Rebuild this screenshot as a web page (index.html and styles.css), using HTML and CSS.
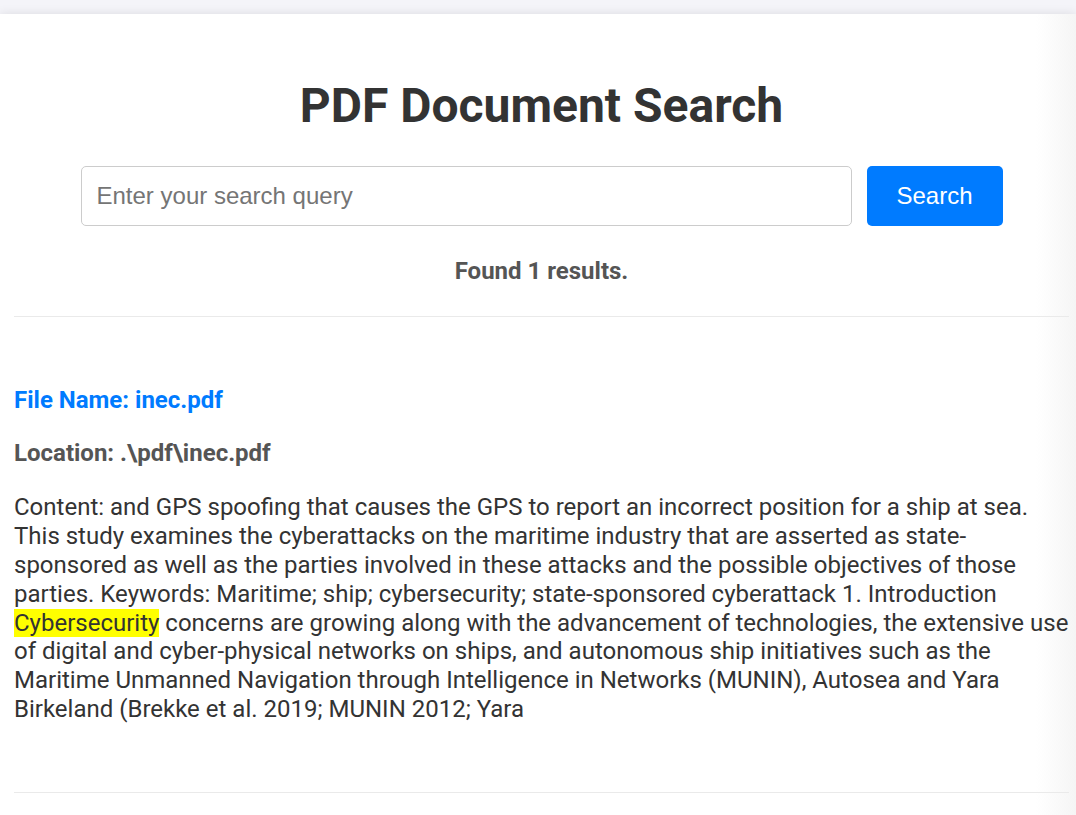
FILE: index.html
```html
<!DOCTYPE html>
<html lang="en">
<head>
<meta charset="utf-8">
<title>PDF Document Search</title>
<link rel="stylesheet" href="styles.css">
</head>
<body>
<div class="container">
  <h1 class="title">PDF Document Search</h1>
  <form class="search-form">
    <input class="search-input" type="text" placeholder="Enter your search query">
    <button class="search-btn" type="button">Search</button>
  </form>
  <p class="found">Found 1 results.</p>
  <hr class="divider">
  <div class="result">
    <h3 class="file-name">File Name: inec.pdf</h3>
    <p class="location">Location: .\pdf\inec.pdf</p>
    <p class="content">Content: and GPS spoofing that causes the GPS to report an incorrect position for a ship at sea. This study examines the cyberattacks on the maritime industry that are asserted as state-sponsored as well as the parties involved in these attacks and the possible objectives of those parties. Keywords: Maritime; ship; cybersecurity; state-sponsored cyberattack 1. Introduction <mark class="hl">Cybersecurity</mark> concerns are growing along with the advancement of technologies, the extensive use of digital and cyber-physical networks on ships, and autonomous ship initiatives such as the Maritime Unmanned Navigation through Intelligence in Networks (MUNIN), Autosea and Yara Birkeland (Brekke et al. 2019; MUNIN 2012; Yara</p>
  </div>
  <hr class="divider">
</div>
</body>
</html>
```

FILE: styles.css
```css
html, body {
  margin: 0;
  padding: 0;
}

body {
  background: #f4f4f9;
  font-family: Roboto, "Liberation Sans", Arial, sans-serif;
  font-size: 24px;
  color: #333;
  padding-top: 14px;
  overflow: hidden;
}

.container {
  background: linear-gradient(to right, #ffffff calc(100% - 40px), #f5f5f5 100%);
  box-shadow: 0 0 10px rgba(0, 0, 0, 0.1);
  padding: 0 7px 60px 14px;
  min-height: 900px;
}

.title {
  margin: 0;
  padding-top: 64px;
  font-size: 48px;
  font-weight: 700;
  line-height: 56px;
  color: #333;
  text-align: center;
}

.search-form {
  display: flex;
  gap: 15px;
  width: 922px;
  margin: 32px auto 0;
}

.search-input {
  flex: 1;
  height: 60px;
  box-sizing: border-box;
  padding: 15px;
  font-family: "Liberation Sans", Arial, sans-serif;
  font-size: 24px;
  color: #333;
  border: 1px solid #ccc;
  border-radius: 5px;
  outline: none;
}

.search-input::placeholder {
  color: #757575;
}

.search-btn {
  width: 136px;
  height: 60px;
  box-sizing: border-box;
  padding: 15px 30px;
  font-family: "Liberation Sans", Arial, sans-serif;
  font-size: 24px;
  color: #fff;
  background: #007bff;
  border: none;
  border-radius: 5px;
}

.found {
  margin: 31px 0 0;
  text-align: center;
  font-weight: 700;
  color: #555;
  line-height: 28.8px;
}

.divider {
  border: 0;
  border-top: 1px solid #eaeaea;
  margin: 30px 0 0;
  height: 0;
}

.result {
  padding: 45px 0 44px;
}

.file-name {
  margin: 24px 0;
  font-size: 24px;
  line-height: 28.8px;
  font-weight: 700;
  color: #007bff;
}

.location {
  margin: 24px 0;
  font-weight: 700;
  color: #555;
  line-height: 28.8px;
}

.content {
  margin: 26px 0 24px;
  line-height: 28.8px;
  color: #333;
}

.hl {
  background: #ffff00;
  color: #333;
}

.result + .divider {
  margin-top: 0;
}
```
